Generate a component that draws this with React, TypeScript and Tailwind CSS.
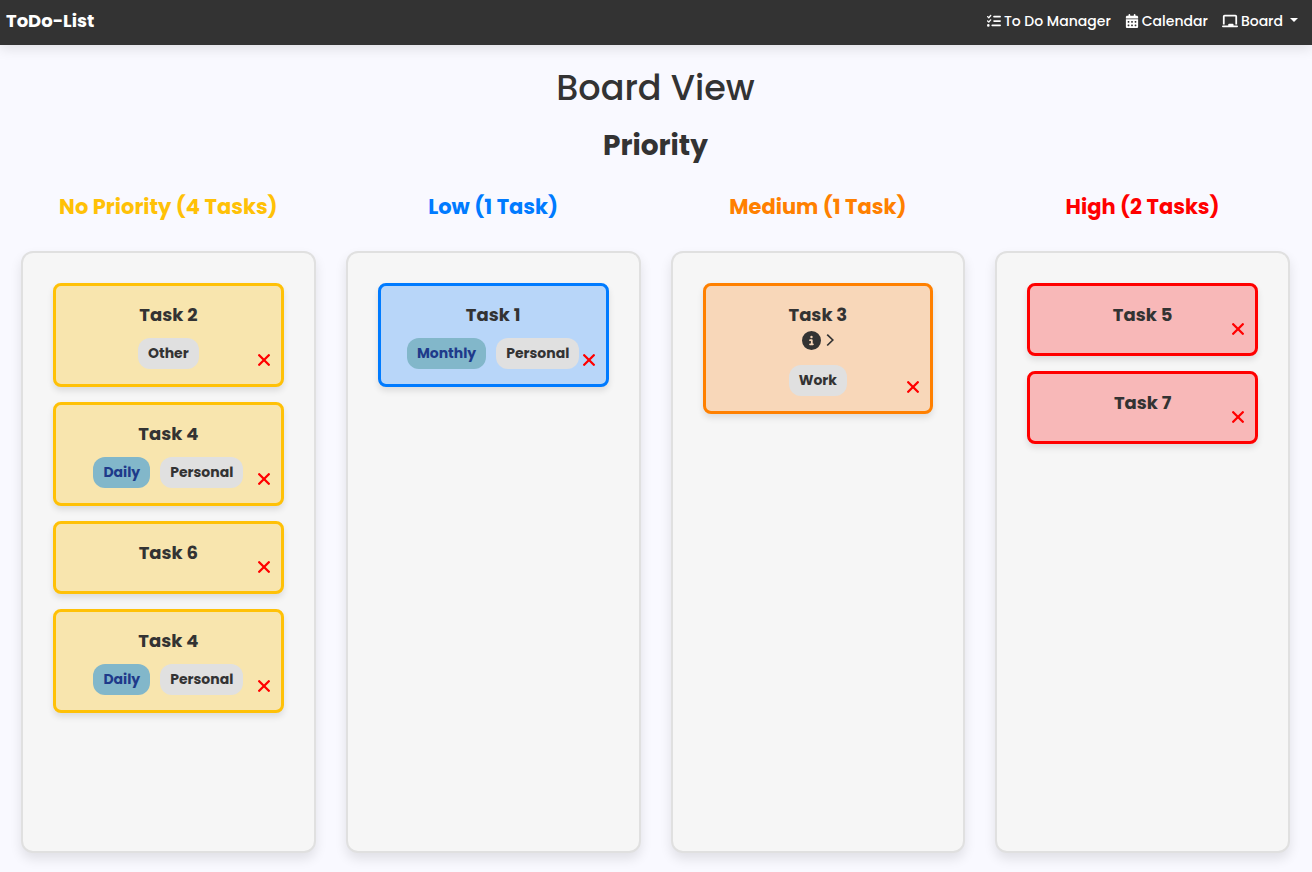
import type { ReactNode } from "react";
import { FaCalendarDays, FaChalkboard, FaCircleInfo, FaListCheck } from "react-icons/fa6";

type Task = { title: string; repeat?: string; category?: string; info?: boolean };
type Column = { name: string; count: string; heading: string; card: string; tasks: Task[] };

const columns: Column[] = [
  {
    name: "No Priority",
    count: "4 Tasks",
    heading: "text-[#ffc107]",
    card: "border-[#ffc107] bg-[#f8e5ae]",
    tasks: [
      { title: "Task 2", category: "Other" },
      { title: "Task 4", repeat: "Daily", category: "Personal" },
      { title: "Task 6" },
      { title: "Task 4", repeat: "Daily", category: "Personal" },
    ],
  },
  {
    name: "Low",
    count: "1 Task",
    heading: "text-[#007bff]",
    card: "border-[#007bff] bg-[#b8d6f9]",
    tasks: [{ title: "Task 1", repeat: "Monthly", category: "Personal" }],
  },
  {
    name: "Medium",
    count: "1 Task",
    heading: "text-[#ff8000]",
    card: "border-[#ff8000] bg-[#f8d7b9]",
    tasks: [{ title: "Task 3", category: "Work", info: true }],
  },
  {
    name: "High",
    count: "2 Tasks",
    heading: "text-[#ff0000]",
    card: "border-[#ff0000] bg-[#f8b8b8]",
    tasks: [{ title: "Task 5" }, { title: "Task 7" }],
  },
];

function NavLink({ icon, children }: { icon: ReactNode; children: ReactNode }) {
  return (
    <a href="#" className="flex items-center gap-[3px] text-sm font-medium text-white">
      {icon}
      {children}
    </a>
  );
}

function TaskCard({ task, color }: { task: Task; color: string }) {
  return (
    <article
      className={`relative rounded-lg border-3 p-[15px] text-center shadow-[0_4px_6px_rgba(0,0,0,0.1)] ${color}`}
    >
      <h4 className="mb-[10px] text-lg leading-[27px] font-bold">{task.title}</h4>
      {task.info && (
        <button
          type="button"
          aria-label="Show details"
          className="mx-auto -mt-[10px] mb-3 flex h-[25px] items-center gap-[5px]"
        >
          <FaCircleInfo size={19} />
          <svg width="8" height="14" viewBox="0 0 8 14" fill="none" stroke="currentColor" strokeWidth="1.7" aria-hidden="true">
            <path d="M1.2.7 6.8 6l-5.6 5.5" />
          </svg>
        </button>
      )}
      {task.category && (
        <div className="flex justify-center gap-[10px] text-sm leading-[21px] font-bold">
          {task.repeat && (
            <span className="rounded-xl bg-[#82b7ca] px-[10px] py-[5px] text-[#1e3a8a]">{task.repeat}</span>
          )}
          <span className="rounded-xl bg-[#e0e0e0] px-[10px] py-[5px]">{task.category}</span>
        </div>
      )}
      <button
        type="button"
        aria-label={`Delete ${task.title}`}
        className="absolute right-[7px] bottom-[14px] flex size-5 items-center justify-center text-[#ff0000]"
      >
        <svg width="12" height="12" viewBox="0 0 12 12" fill="none" stroke="currentColor" strokeWidth="2.3" strokeLinecap="round" aria-hidden="true">
          <path d="M1.2 1.2l9.6 9.6M10.8 1.2l-9.6 9.6" />
        </svg>
      </button>
    </article>
  );
}

export default function App() {
  return (
    <div className="min-h-screen bg-[#f9f9ff] font-['Poppins','Inter',sans-serif] text-[#333]">
      <nav className="flex h-[45px] items-center justify-between bg-[#333] pr-[14px] pb-[3px] pl-[6px] text-white shadow-[0_4px_12px_rgba(0,0,0,0.1)]">
        <a href="#" className="text-lg font-bold">
          ToDo-List
        </a>
        <div className="flex items-center gap-[14px]">
          <NavLink icon={<FaListCheck size={14} />}>To Do Manager</NavLink>
          <NavLink icon={<FaCalendarDays size={14} />}>Calendar</NavLink>
          <NavLink icon={<FaChalkboard size={16} />}>
            Board
            <svg width="8" height="4" viewBox="0 0 8 4" className="mb-[2px] ml-1" fill="currentColor" aria-hidden="true">
              <path d="M0 0h8L4 4z" />
            </svg>
          </NavLink>
        </div>
      </nav>

      <main className="pt-[19px] pr-[22px] pb-5 pl-[21px] text-center">
        <h1 className="text-[35px] leading-[48px] font-medium">Board View</h1>
        <h2 className="mt-[15px] text-[28px] leading-[38px] font-bold">Priority</h2>
        <div className="mt-[27px] grid grid-cols-4 gap-x-[30px]">
          {columns.map((column) => (
            <section key={column.name}>
              <h3 className={`text-[21px] leading-[30px] font-bold ${column.heading}`}>
                {column.name} ({column.count})
              </h3>
              <div className="mt-[29px] flex min-h-[602px] flex-col gap-[15px] rounded-xl border-2 border-[#e0e0e0] bg-[#f6f6f6] p-[30px] shadow-[0_6px_12px_rgba(0,0,0,0.1)]">
                {column.tasks.map((task, index) => (
                  <TaskCard key={index} task={task} color={column.card} />
                ))}
              </div>
            </section>
          ))}
        </div>
      </main>
    </div>
  );
}
